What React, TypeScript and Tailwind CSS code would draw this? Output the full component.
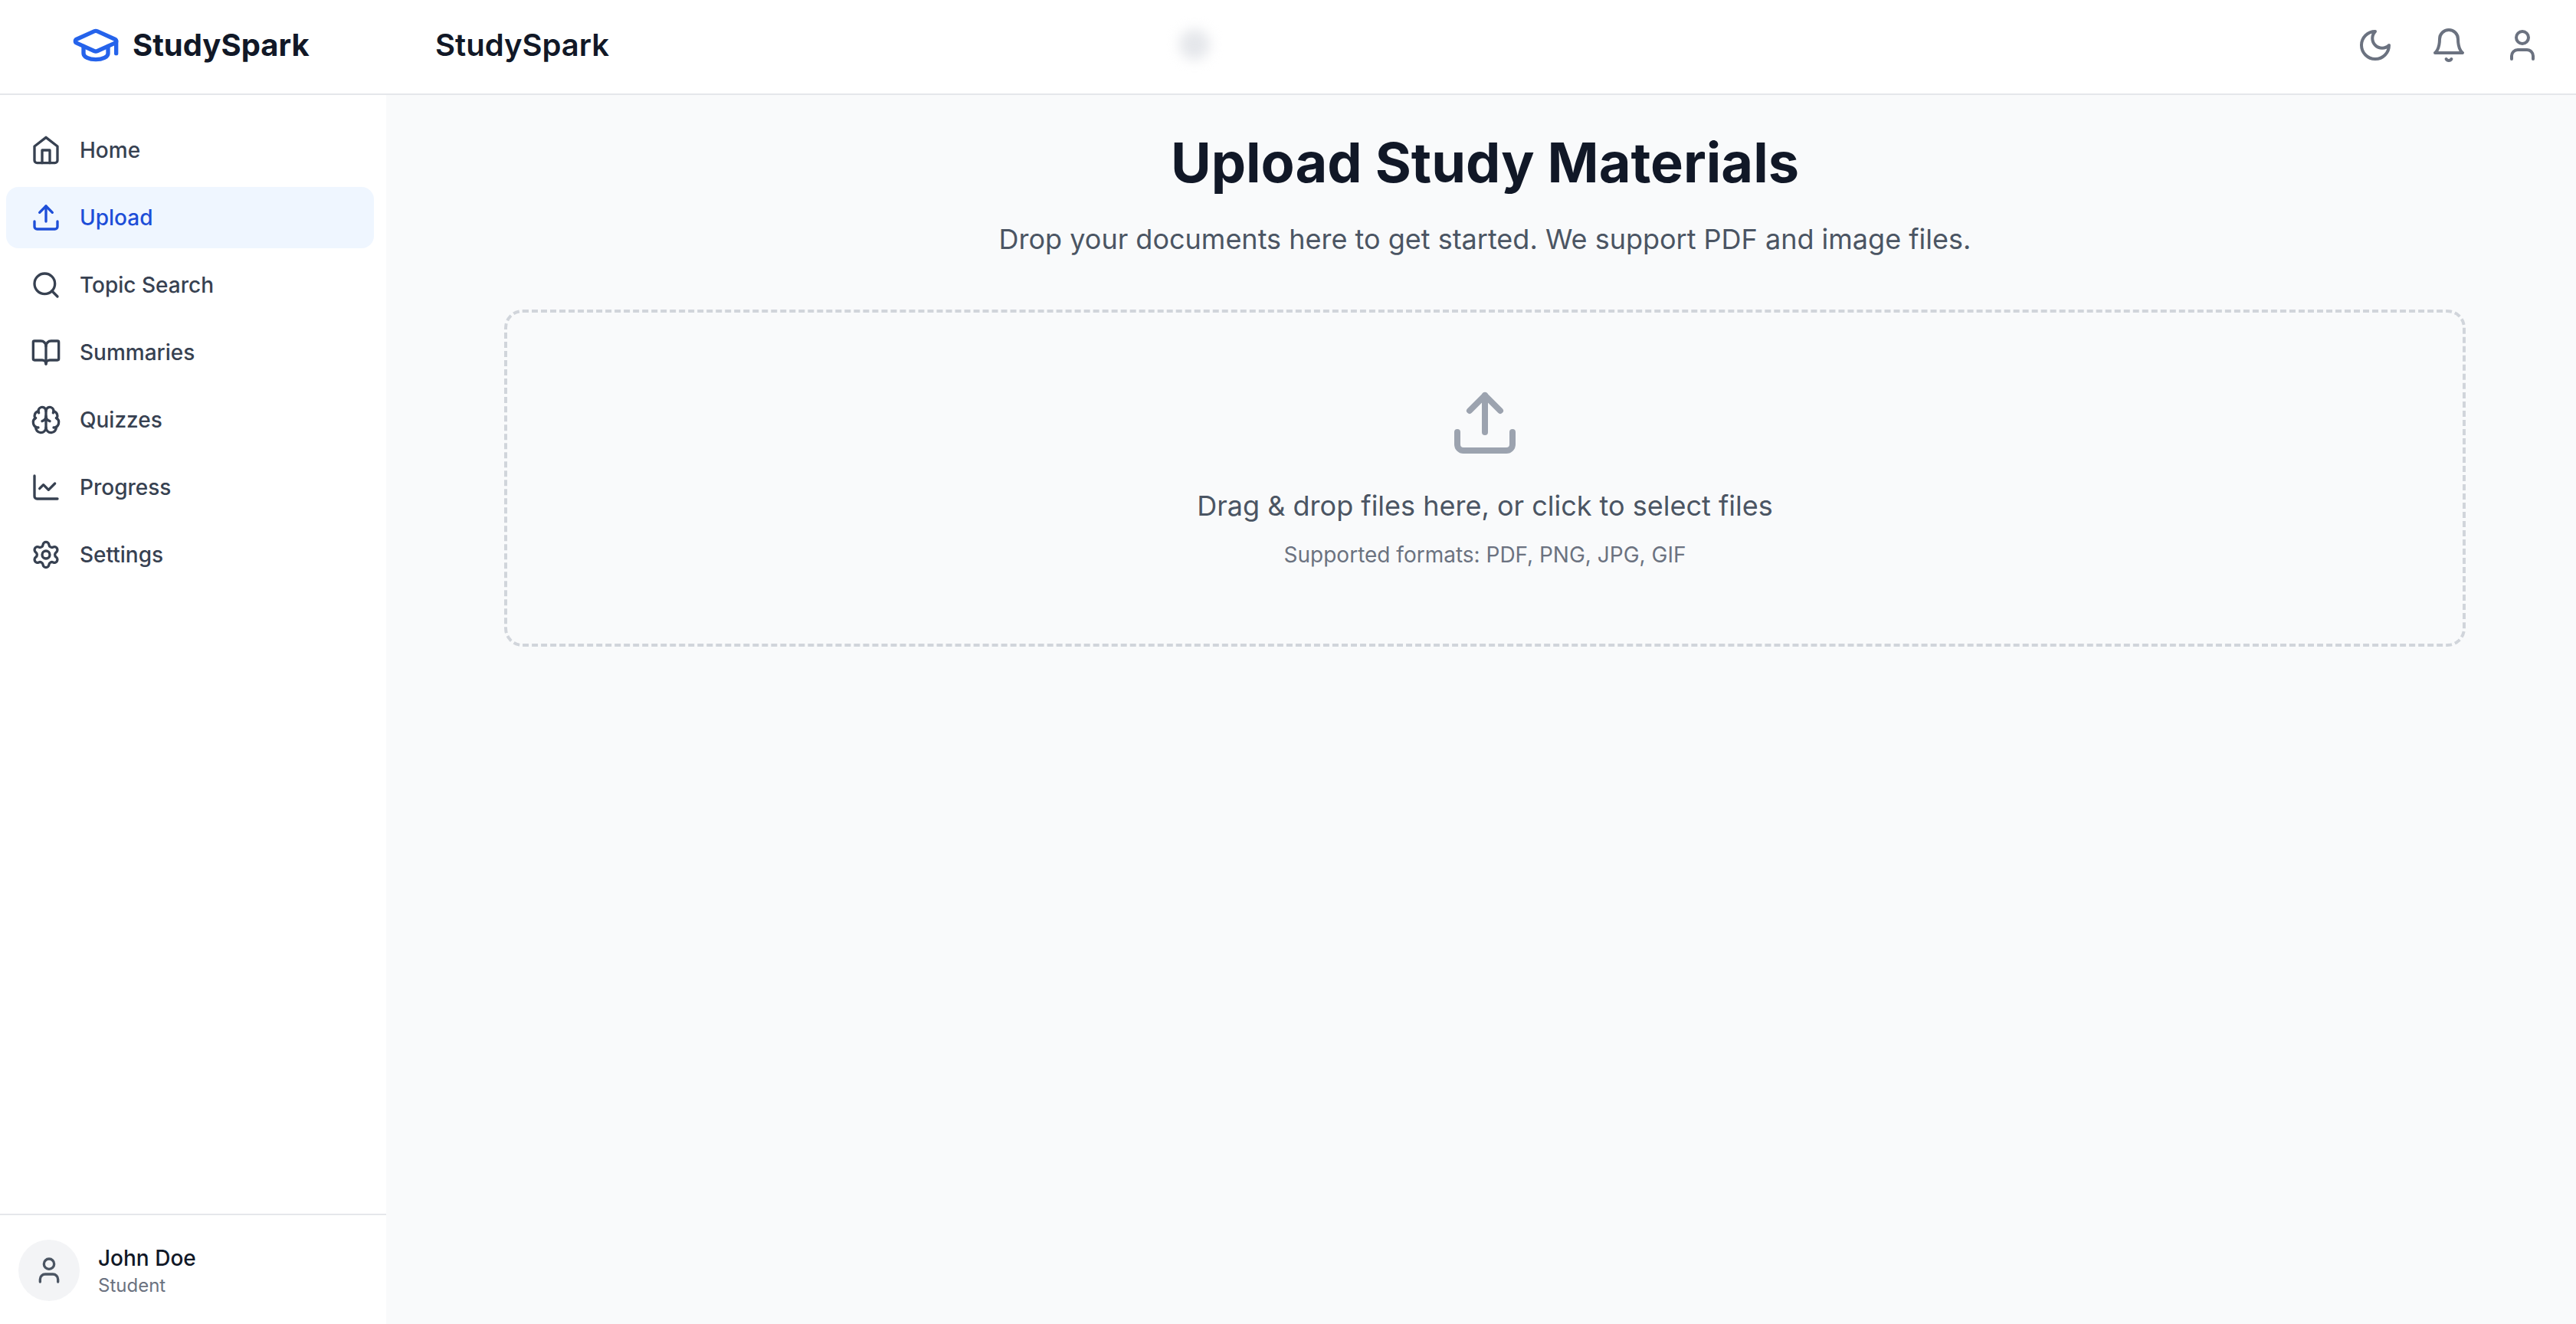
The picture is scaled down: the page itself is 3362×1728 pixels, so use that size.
import { BookOpen, Brain, ChartLine, GraduationCap, Search, Settings } from 'lucide-react';

type IconProps = { className?: string };

function Svg({ className, children }: IconProps & { children: React.ReactNode }) {
  return (
    <svg
      viewBox="0 0 24 24"
      fill="none"
      stroke="currentColor"
      strokeWidth={2}
      strokeLinecap="round"
      strokeLinejoin="round"
      className={className}
    >
      {children}
    </svg>
  );
}

const HomeIcon = ({ className }: IconProps) => (
  <Svg className={className}>
    <path d="m3 9 9-7 9 7v11a2 2 0 0 1-2 2H5a2 2 0 0 1-2-2z" />
    <polyline points="9 22 9 12 15 12 15 22" />
  </Svg>
);

const UploadIcon = ({ className }: IconProps) => (
  <Svg className={className}>
    <path d="M21 15v4a2 2 0 0 1-2 2H5a2 2 0 0 1-2-2v-4" />
    <polyline points="17 8 12 3 7 8" />
    <line x1="12" x2="12" y1="3" y2="15" />
  </Svg>
);

const MoonIcon = ({ className }: IconProps) => (
  <Svg className={className}>
    <path d="M12 3a6 6 0 0 0 9 9 9 9 0 1 1-9-9Z" />
  </Svg>
);

const BellIcon = ({ className }: IconProps) => (
  <Svg className={className}>
    <path d="M6 8a6 6 0 0 1 12 0c0 7 3 9 3 9H3s3-2 3-9" />
    <path d="M10.3 21a1.94 1.94 0 0 0 3.4 0" />
  </Svg>
);

const UserIcon = ({ className }: IconProps) => (
  <Svg className={className}>
    <path d="M19 21v-2a4 4 0 0 0-4-4H9a4 4 0 0 0-4 4v2" />
    <circle cx="12" cy="7" r="4" />
  </Svg>
);

const NAV = [
  { label: 'Home', icon: HomeIcon },
  { label: 'Upload', icon: UploadIcon, active: true },
  { label: 'Topic Search', icon: Search },
  { label: 'Summaries', icon: BookOpen },
  { label: 'Quizzes', icon: Brain },
  { label: 'Progress', icon: ChartLine },
  { label: 'Settings', icon: Settings },
];

export default function App() {
  return (
    <div className="relative flex h-[1728px] w-[3362px] flex-col overflow-hidden bg-[#f9fafb] font-['Inter',sans-serif]">
      <header className="flex h-[124px] shrink-0 items-center border-b-2 border-[#e5e7eb] bg-white pb-[4px]">
        <div className="flex w-[504px] shrink-0 items-center gap-[16px] pl-[93px]">
          <GraduationCap className="h-[64px] w-[64px] text-[#2563eb]" strokeWidth={2} />
          <span className="text-[40px] font-bold leading-[56px] text-[#111827]">StudySpark</span>
        </div>
        <h1 className="ml-[64px] text-[40px] font-semibold leading-[56px] text-[#111827]">StudySpark</h1>
        <div className="ml-auto flex items-center gap-[48px] pr-[46px]">
          <MoonIcon className="h-[48px] w-[48px] text-[#6b7280]" />
          <BellIcon className="h-[48px] w-[48px] text-[#6b7280]" />
          <UserIcon className="h-[48px] w-[48px] text-[#6b7280]" />
        </div>
      </header>

      {/* blurred spot in the top bar */}
      <div className="absolute left-[1539px] top-[38px] h-[40px] w-[40px] rounded-full bg-[#e5e7eb] blur-[8px]" />

      <div className="flex min-h-0 flex-1">
        <aside className="flex w-[504px] shrink-0 flex-col bg-white">
          <nav className="flex flex-1 flex-col gap-[8px] pl-[8px] pr-[16px] pt-[32px]">
            {NAV.map(({ label, icon: Icon, active }) => (
              <div
                key={label}
                className={`flex h-[80px] items-center gap-[24px] rounded-[16px] px-[32px] text-[28px] font-medium leading-[40px] ${active ? 'bg-[#eff6ff] text-[#1d4ed8]' : 'text-[#374151]'}`}
              >
                <Icon className="h-[40px] w-[40px] shrink-0" />
                {label}
              </div>
            ))}
          </nav>
          <div className="flex items-center gap-[24px] border-t-2 border-[#e5e7eb] px-[24px] pb-[30px] pt-[32px]">
            <div className="flex h-[80px] w-[80px] items-center justify-center rounded-full bg-[#f3f4f6]">
              <UserIcon className="h-[40px] w-[40px] text-[#4b5563]" />
            </div>
            <div className="flex flex-col">
              <span className="text-[28px] font-medium leading-[40px] text-[#111827]">John Doe</span>
              <span className="text-[24px] leading-[32px] text-[#6b7280]">Student</span>
            </div>
          </div>
        </aside>

        <main className="flex-1 pl-[154px] pr-[144px] pt-[48px]">
          <div className="flex flex-col items-center">
            <h2 className="text-[72px] font-bold leading-[80px] text-[#111827]">Upload Study Materials</h2>
            <p className="mt-[32px] text-[36px] leading-[56px] text-[#4b5563]">
              Drop your documents here to get started. We support PDF and image files.
            </p>
          </div>
          <div className="mt-[64px] flex w-full flex-col items-center rounded-[24px] border-[4px] border-dashed border-[#d1d5db] p-[96px]">
            <UploadIcon className="h-[96px] w-[96px] text-[#9ca3af]" />
            <p className="mt-[32px] text-[36px] leading-[56px] text-[#4b5563]">
              Drag &amp; drop files here, or click to select files
            </p>
            <p className="mt-[16px] text-[28px] leading-[40px] text-[#6b7280]">Supported formats: PDF, PNG, JPG, GIF</p>
          </div>
        </main>
      </div>
    </div>
  );
}
